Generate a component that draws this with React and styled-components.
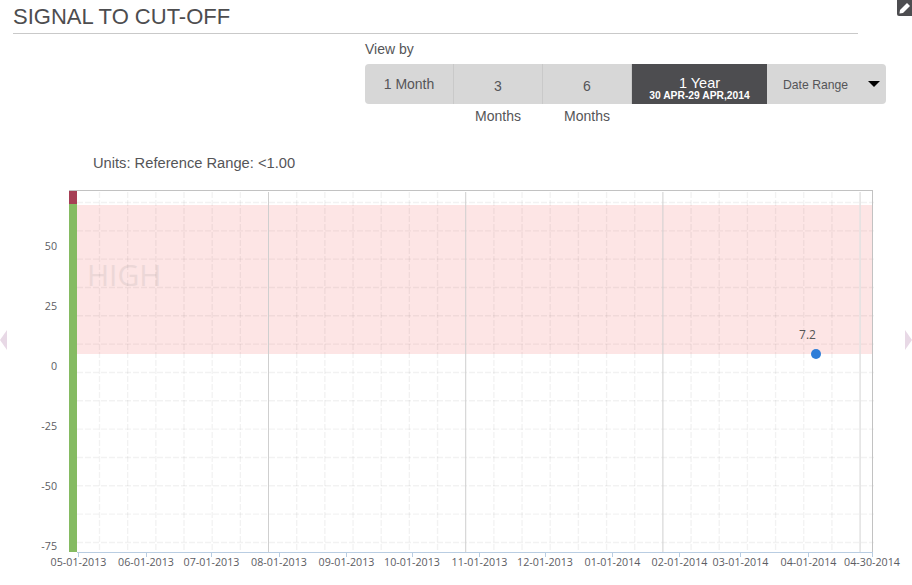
import styled, { createGlobalStyle } from "styled-components";

const GlobalStyle = createGlobalStyle`
  html, body {
    margin: 0;
    padding: 0;
    background: #fff;
    overflow: hidden;
  }
  body {
    font-family: "Liberation Sans", Arial, sans-serif;
    color: #555558;
  }
`;

const RANGES = [
  { id: "1m", size: 89, title: "1 Month" },
  { id: "3m", size: 89, title: "3", below: "Months" },
  { id: "6m", size: 89, title: "6", below: "Months" },
];

const PLOT = { left: 77, right: 872, top: 190, bottom: 552 };
const H_LINES = Array.from({ length: 13 }, (_, i) => 202.5 + i * 28.33);
const V_LINES = Array.from({ length: 28 }, (_, i) => 99.5 + i * 28.17);
const SOLID = [6, 13, 20];
const Y_LABELS = [
  { y: 246, t: "50" },
  { y: 306, t: "25" },
  { y: 366, t: "0" },
  { y: 426, t: "-25" },
  { y: 486, t: "-50" },
  { y: 546, t: "-75" },
];
const X_LABELS = [
  { x: 78.5, t: "05-01-2013" },
  { x: 146, t: "06-01-2013" },
  { x: 211.5, t: "07-01-2013" },
  { x: 279, t: "08-01-2013" },
  { x: 346.5, t: "09-01-2013" },
  { x: 412, t: "10-01-2013" },
  { x: 479.5, t: "11-01-2013" },
  { x: 545, t: "12-01-2013" },
  { x: 612.5, t: "01-01-2014" },
  { x: 679.5, t: "02-01-2014" },
  { x: 740.5, t: "03-01-2014" },
  { x: 808.5, t: "04-01-2014" },
  { x: 872, t: "04-30-2014" },
];

function Chart() {
  return (
    <ChartSvg width="912" height="400" viewBox="0 185 912 400">
      <rect x={PLOT.left} y="205" width={PLOT.right - PLOT.left} height="149" fill="#fde5e5" />
      <HighText x="87" y="286">HIGH</HighText>

      {H_LINES.map((y) => (
        <line key={y} x1={PLOT.left} x2={PLOT.right + 2} y1={y} y2={y} stroke="#000" strokeOpacity="0.05" strokeWidth="1.4" strokeDasharray="6 2" />
      ))}
      {V_LINES.map((x, i) =>
        SOLID.includes(i) ? (
          <line key={x} x1={x} x2={x} y1="192" y2={PLOT.bottom} stroke="#cfcfcf" />
        ) : i === 27 ? (
          <line key={x} x1={x} x2={x} y1="192" y2={PLOT.bottom} stroke="#e2e2e2" strokeWidth="1.5" />
        ) : (
          <line key={x} x1={x} x2={x} y1="192" y2={PLOT.bottom} stroke="#000" strokeOpacity="0.05" strokeWidth="1.4" strokeDasharray="6 2" />
        )
      )}

      <rect x="69" y="190" width="8" height="14" fill="#a63f55" />
      <rect x="69" y="204" width="8" height="348" fill="#85bb62" />
      <line x1="69" x2="872.5" y1="190.5" y2="190.5" stroke="#c2c2c2" />
      <line x1="872.5" x2="872.5" y1="190" y2="552" stroke="#c2c2c2" />

      <line x1="77" x2="873" y1="552.5" y2="552.5" stroke="#b9cde2" />
      {X_LABELS.map((l) => (
        <line key={l.x} x1={Math.floor(l.x) + 0.5} x2={Math.floor(l.x) + 0.5} y1="552" y2="557" stroke="#b9cde2" />
      ))}

      {Y_LABELS.map((l) => (
        <AxisText key={l.t} x="57" y={l.y + 4} textAnchor="end">{l.t}</AxisText>
      ))}
      {X_LABELS.map((l) => (
        <AxisText key={l.t} x={l.x} y="566" textAnchor="middle">{l.t}</AxisText>
      ))}

      <PointLabel x="807.5" y="339" textAnchor="middle">7.2</PointLabel>
      <circle cx="816" cy="354" r="5" fill="#2f7ed8" />
    </ChartSvg>
  );
}

export default function App() {
  return (
    <>
      <GlobalStyle />
      <Page>
        <EditBadge>
          <svg width="15" height="16" viewBox="0 0 15 16">
            <path d="M2.5 13.5 L3 10 L10 3 L13 6 L6 13 Z" fill="#fff" />
          </svg>
        </EditBadge>
        <SideArrow $side="left" />
        <SideArrow $side="right" />

        <Title>SIGNAL TO CUT-OFF</Title>

        <ViewBy>
          <ViewByLabel>View by</ViewByLabel>
          <RangeBar>
            {RANGES.map((r) => (
              <RangeCell key={r.id} $w={r.size} $wrapped={!!r.below}>
                {r.title}
                {r.below && <Below>{r.below}</Below>}
              </RangeCell>
            ))}
            <ActiveCell>
              <ActiveTitle>1 Year</ActiveTitle>
              <ActiveDates>30 APR-29 APR,2014</ActiveDates>
            </ActiveCell>
            <DateRange>
              Date Range
              <Caret />
            </DateRange>
          </RangeBar>
        </ViewBy>

        <Units>Units: Reference Range: &lt;1.00</Units>
        <Chart />
      </Page>
    </>
  );
}

const Page = styled.div`
  position: relative;
  width: 912px;
  height: 585px;
  overflow: hidden;
`;

const Title = styled.h1`
  margin: 0 0 0 13px;
  width: 845px;
  height: 33px;
  border-bottom: 1px solid #c9c9c9;
  font-size: 22px;
  line-height: 33px;
  font-weight: 400;
  color: #4d4d4f;
  white-space: nowrap;
`;

const ViewBy = styled.div`
  margin: 7px 0 0 365px;
  width: 521px;
`;

const ViewByLabel = styled.div`
  font-size: 14px;
  line-height: 17px;
  height: 23px;
`;

const RangeBar = styled.div`
  display: flex;
  height: 40px;
  background: #d7d7d7;
  border-radius: 4px;
`;

const RangeCell = styled.div`
  position: relative;
  box-sizing: border-box;
  width: ${(p) => p.$w}px;
  border-right: 1px solid #c9c9c9;
  text-align: center;
  font-size: 14px;
  line-height: ${(p) => (p.$wrapped ? "44px" : "40px")};
`;

const Below = styled.div`
  position: absolute;
  left: 0;
  right: 0;
  top: 40px;
  line-height: 24px;
`;

const ActiveCell = styled.div`
  width: 135px;
  background: #4d4d50;
  color: #fff;
  text-align: center;
`;

const ActiveTitle = styled.div`
  margin-top: 12px;
  font-size: 14.5px;
  line-height: 14px;
`;

const ActiveDates = styled.div`
  font-size: 10.3px;
  line-height: 12px;
  font-weight: 700;
`;

const DateRange = styled.div`
  flex: 1;
  display: flex;
  align-items: center;
  padding: 2px 0 0 16px;
  font-size: 12.2px;
`;

const Caret = styled.span`
  margin: -2px 0 0 20px;
  border-left: 6px solid transparent;
  border-right: 6px solid transparent;
  border-top: 6px solid #000;
`;

const Units = styled.div`
  margin: 51px 0 0 93px;
  font-size: 14.7px;
  line-height: 17px;
`;

const ChartSvg = styled.svg`
  display: block;
  margin-top: 13px;
`;

const AxisText = styled.text`
  font-family: "Open Sans", sans-serif;
  font-size: 10.7px;
  fill: #5c5c62;
`;

const PointLabel = styled.text`
  font-family: "Open Sans", sans-serif;
  font-size: 12px;
  fill: #555;
`;

const HighText = styled.text`
  font-family: "Open Sans", sans-serif;
  font-size: 30px;
  fill: #ecd7d7;
`;

const EditBadge = styled.div`
  position: absolute;
  top: 0;
  left: 897px;
  width: 15px;
  height: 16px;
  background: #4d4d50;
  border-radius: 0 0 0 2px;
`;

const SideArrow = styled.div`
  position: absolute;
  top: 330px;
  ${(p) => (p.$side === "left" ? "left: 0;" : "right: 0;")}
  border-top: 10px solid transparent;
  border-bottom: 10px solid transparent;
  ${(p) =>
    p.$side === "left"
      ? "border-right: 7px solid #e8d9e6;"
      : "border-left: 7px solid #e8d9e6;"}
`;
